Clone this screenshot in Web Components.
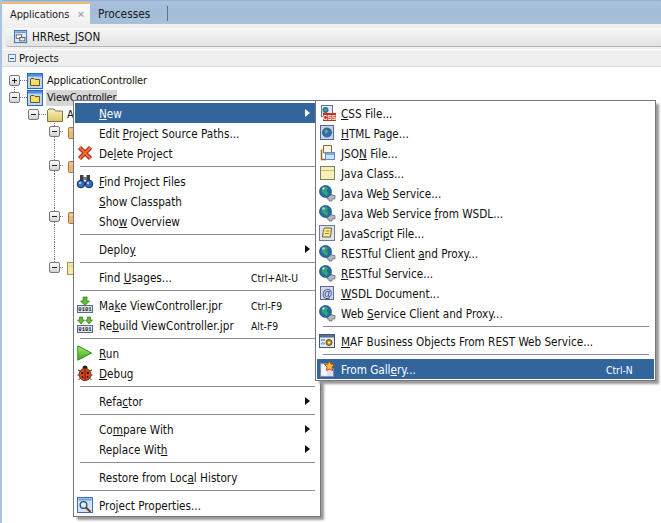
<!DOCTYPE html>
<html>
<head>
<meta charset="utf-8">
<title>Applications</title>
<style>
  html, body { margin: 0; padding: 0; background: #fff; }
  body { font: 11.65px "DejaVu Sans", "Liberation Sans", sans-serif; font-stretch: condensed; color: #111; }
  u { text-underline-offset: 1px; }
</style>
</head>
<body>

<ide-window>
  <tab-bar slot="top">
    <tab-item active closable style="font-size:11px;letter-spacing:-.1px">Applications</tab-item>
    <tab-item style="font-size:11.8px">Processes</tab-item>
  </tab-bar>
  <app-strip slot="top" style="font-size:11.5px">HRRest_JSON</app-strip>
  <section-head slot="top" style="font-size:11.2px">Projects</section-head>

  <tree-list slot="top">
    <tree-row x="14" handle="plus" icon="project" lines="14:b">ApplicationController</tree-row>
    <tree-row x="14" handle="minus" icon="project" lines="14:t 33:b" selected>ViewController</tree-row>
    <tree-row x="33" handle="minus" icon="folder" lines="54:b">A</tree-row>
    <tree-row x="54" handle="minus" icon="pkg" lines="54:f"></tree-row>
    <tree-row lines="54:f"></tree-row>
    <tree-row x="54" handle="minus" icon="pkg" lines="54:f"></tree-row>
    <tree-row lines="54:f"></tree-row>
    <tree-row lines="54:f"></tree-row>
    <tree-row x="54" handle="minus" icon="pkg" lines="54:f"></tree-row>
    <tree-row lines="54:f"></tree-row>
    <tree-row lines="54:f"></tree-row>
    <tree-row x="54" handle="minus" icon="yfolder" lines="54:t"></tree-row>
  </tree-list>

  <pop-menu style="left:73px;top:100px;width:248px;--short:54px">
    <menu-row active arrow><u>N</u>ew</menu-row>
    <menu-row>Edit <u>P</u>roject Source Paths...</menu-row>
    <menu-row icon="delete">De<u>l</u>ete Project</menu-row>
    <menu-sep></menu-sep>
    <menu-row icon="binoculars"><u>F</u>ind Project Files</menu-row>
    <menu-row><u>S</u>how Classpath</menu-row>
    <menu-row>Sho<u>w</u> Overview</menu-row>
    <menu-sep></menu-sep>
    <menu-row arrow>Deplo<u>y</u></menu-row>
    <menu-sep></menu-sep>
    <menu-row shortcut="Ctrl+Alt-U">Find <u>U</u>sages...</menu-row>
    <menu-sep></menu-sep>
    <menu-row icon="make" shortcut="Ctrl-F9">Ma<u>k</u>e ViewController.jpr</menu-row>
    <menu-row icon="rebuild" shortcut="Alt-F9">Re<u>b</u>uild ViewController.jpr</menu-row>
    <menu-sep></menu-sep>
    <menu-row icon="run"><u>R</u>un</menu-row>
    <menu-row icon="debug"><u>D</u>ebug</menu-row>
    <menu-sep></menu-sep>
    <menu-row arrow>Refa<u>c</u>tor</menu-row>
    <menu-sep></menu-sep>
    <menu-row arrow>Co<u>m</u>pare With</menu-row>
    <menu-row arrow>Replace Wit<u>h</u></menu-row>
    <menu-sep></menu-sep>
    <menu-row>Restore from Loc<u>a</u>l History</menu-row>
    <menu-sep></menu-sep>
    <menu-row icon="props">Pro<u>j</u>ect Properties...</menu-row>
  </pop-menu>

  <pop-menu style="left:315px;top:100px;width:341px;--short:34px;--sep-left:6px;--sep-right:5px">
    <menu-row icon="css"><u>C</u>SS File...</menu-row>
    <menu-row icon="html"><u>H</u>TML Page...</menu-row>
    <menu-row icon="json">JSO<u>N</u> File...</menu-row>
    <menu-row icon="jclass"><u>J</u>ava Class...</menu-row>
    <menu-row icon="ws">Java We<u>b</u> Service...</menu-row>
    <menu-row icon="ws">Java Web Service <u>f</u>rom WSDL...</menu-row>
    <menu-row icon="js">JavaScri<u>p</u>t File...</menu-row>
    <menu-row icon="ws">RESTful Client <u>a</u>nd Proxy...</menu-row>
    <menu-row icon="ws"><u>R</u>ESTful Service...</menu-row>
    <menu-row icon="wsdl"><u>W</u>SDL Document...</menu-row>
    <menu-row icon="ws">Web <u>S</u>ervice Client and Proxy...</menu-row>
    <menu-sep></menu-sep>
    <menu-row icon="maf"><u>M</u>AF Business Objects From REST Web Service...</menu-row>
    <menu-sep></menu-sep>
    <menu-row active icon="gallery" shortcut="Ctrl-N">From Gall<u>e</u>ry...</menu-row>
  </pop-menu>
</ide-window>

<script>
const BITS = `<rect x=".5" y="8.5" width="15" height="7" fill="#dfe6f0" stroke="#5a6a86"/><text x="8" y="14.3" font-size="5.6" font-family="Liberation Mono" font-weight="bold" text-anchor="middle" fill="#222">0101</text>`;

const ICONS = {
  project: `<rect x=".5" y=".5" width="15" height="15" fill="#bcd6f2" stroke="#2c68c0"/><rect x="1" y="1" width="14" height="2.5" fill="#4f8ddc"/>
    <path d="M3.5 6V12.5H12.5V6.5H8L7 5.5H4Z" fill="#f5dc6c" stroke="#6e5c14"/>`,
  folder: `<defs><linearGradient id="f" x1="0" y1="0" x2="0" y2="1"><stop offset="0" stop-color="#fbf3bd"/><stop offset="1" stop-color="#dcc768"/></linearGradient></defs>
    <path d="M.5 3.5 2 2H7L8.5 4H15.5V14.5H.5Z" fill="url(#f)" stroke="#7d7344"/>`,
  yfolder: `<rect x="3.5" y="2.5" width="12" height="12" fill="#f5e9ae" stroke="#a39356"/><path d="M5 6H14" stroke="#d9c678"/>`,
  pkg: `<rect x="4.5" y="3.5" width="11" height="11" rx="1" fill="#e8b878" stroke="#a8773c"/><path d="M5 6H15" stroke="#f6dcae"/>`,
  window: `<rect x=".5" y=".5" width="14" height="14" fill="#dbe7f5" stroke="#2e66ad"/><rect x="1.5" y="1.5" width="12" height="2" fill="#6d9bd6"/>
    <rect x="2.5" y="5.5" width="6" height="4" fill="#fff" stroke="#555"/><rect x="6.5" y="8.5" width="6" height="4" fill="#e6e6e6" stroke="#555"/>`,
  delete: `<path d="M2.5 2.5 13.5 13.5M13.5 2.5 2.5 13.5" stroke="#a52c10" stroke-width="4.4" fill="none"/><path d="M2.5 2.5 13.5 13.5M13.5 2.5 2.5 13.5" stroke="#f2693a" stroke-width="2.4" fill="none"/>`,
  binoculars: `<path d="M3 2H6.5V8H3ZM9.5 2H13V8H9.5Z" fill="#3a3f4a"/><rect x="6" y="4" width="4" height="3" fill="#6b7280"/>
    <circle cx="4" cy="11" r="3.8" fill="#2f6fc4" stroke="#1c2c50"/><circle cx="12" cy="11" r="3.8" fill="#2f6fc4" stroke="#1c2c50"/><circle cx="3" cy="10" r="1.2" fill="#9fd0f6"/><circle cx="11" cy="10" r="1.2" fill="#9fd0f6"/>`,
  make: `<path d="M6 0H10V4H12.5L8 8.5 3.5 4H6Z" fill="#5fbc2e" stroke="#2c7a1a" stroke-width=".7"/>${BITS}`,
  rebuild: `<path d="M2.5 0H5.5V3H7.5L4 7 .5 3H2.5ZM10.5 0H13.5V3H15.5L12 7 8.5 3H10.5Z" fill="#5fbc2e" stroke="#2c7a1a" stroke-width=".7"/>${BITS}`,
  run: `<defs><linearGradient id="g" x1="0" y1="0" x2="0" y2="1"><stop offset="0" stop-color="#a8ec70"/><stop offset="1" stop-color="#3aa81e"/></linearGradient></defs>
    <path d="M.8 .8V15.2L14.5 8Z" fill="url(#g)" stroke="#2d8a22"/>`,
  debug: `<path d="M1 5 3 6M15 5 13 6M.5 10H3M15.5 10H13M1.5 15 3.5 13M14.5 15 12.5 13" stroke="#333" fill="none"/><circle cx="8" cy="3" r="2.5" fill="#222"/>
    <circle cx="8" cy="9.5" r="6" fill="#d8481c" stroke="#7c2a10"/><path d="M8 4V15.5" stroke="#6a2410"/><circle cx="5.2" cy="8" r="1.2" fill="#3a1a10"/><circle cx="10.8" cy="8" r="1.2" fill="#3a1a10"/><circle cx="5.5" cy="12" r="1" fill="#3a1a10"/><circle cx="10.5" cy="12" r="1" fill="#3a1a10"/>`,
  props: `<rect x=".5" y=".5" width="15" height="15" fill="#cfe2f6" stroke="#3a6fb5"/><rect x="1.5" y="1.5" width="13" height="2" fill="#6f9fdc"/>
    <circle cx="6.5" cy="8" r="3.3" fill="#d8f0fa" stroke="#28506e" stroke-width="1.3"/><path d="M9 10.5 13.5 15" stroke="#7a3a20" stroke-width="2"/>`,
  css: `<rect x="2.5" y=".5" width="11" height="11" fill="#dfe8f4" stroke="#62748e"/><circle cx="6.5" cy="5" r="3" fill="#2f6fb4"/><path d="M5 4.5 7 3.5 8 5.5 6 6.5Z" fill="#58b040"/>
    <rect x="4" y="8" width="13" height="8" fill="#c9301c"/><text x="10.5" y="14.5" font-size="6.5" font-weight="bold" font-family="Liberation Sans" text-anchor="middle" fill="#fff">CSS</text>`,
  html: `<rect x="1.5" y=".5" width="13" height="14" fill="#c6d3e8" stroke="#57688a"/><circle cx="8" cy="7.5" r="4.6" fill="#2c6db8" stroke="#1b3f78" stroke-width=".6"/><path d="M5.5 5.5 8 4.5 9 7 6.5 9Z" fill="#66b84a"/>`,
  json: `<path d="M4.5 .5H12.5V8H4.5Z" fill="#fff7e0" stroke="#7c6a3a"/><path d="M2.5 4.5V14.5H7" fill="none" stroke="#8a6a24" stroke-width="1.5"/>
    <rect x="6.5" y="7.5" width="9" height="7" fill="#cfe2f8" stroke="#5b8ccc"/><rect x="7" y="8" width="8" height="2" fill="#7eaae0"/>`,
  jclass: `<rect x="1.5" y="1.5" width="14" height="13" fill="#f9f0b4" stroke="#7e7e70"/><path d="M2 5.5H15" stroke="#c9bd7a"/>`,
  ws: `<path d="M10 9H13V10.5H16V14H13V16H10V14H8V11H10Z" fill="#b4bac4" stroke="#5b6068" stroke-width=".7"/>
    <circle cx="6.5" cy="6.5" r="6" fill="#1f6cae" stroke="#16466e" stroke-width=".7"/><path d="M3 3.5 6.5 1.5 9 3 7.5 6 9.5 8 7.5 11 4.5 8.5 2.5 7Z" fill="#3ba264"/><circle cx="4.5" cy="3.5" r="1.3" fill="#cfeaff" opacity=".8"/>`,
  js: `<rect x=".5" y=".5" width="15" height="15" fill="#dde4ef" stroke="#6c7a94"/><path d="M5.5 3H12.5L11.5 12H3.5L4.5 4.5Z" fill="#f7e8a0" stroke="#7e5a18"/><path d="M6.5 6H10.5M6 8.5H10" stroke="#a58a3c"/>`,
  wsdl: `<rect x="1.5" y="1.5" width="13" height="13" fill="#d4dcec" stroke="#5d6a86"/><text x="8" y="12" font-size="10.5" font-weight="bold" font-family="Liberation Sans" text-anchor="middle" fill="#33449a">@</text>`,
  maf: `<rect x=".5" y="1.5" width="15" height="13" fill="#e6ecf4" stroke="#46586f"/><rect x="1" y="2" width="14" height="2.5" fill="#51719c"/><rect x="2" y="6" width="4" height="2" fill="#8ea8c8"/><rect x="2" y="9.5" width="4" height="2" fill="#8ea8c8"/>
    <circle cx="10" cy="9.5" r="3" fill="#c88e24" stroke="#6e4d10"/><circle cx="10" cy="9.5" r="1" fill="#fff"/>`,
  gallery: `<path d="M1.5 2.5H9L14.5 8V15.5H1.5Z" fill="#dcdcf2" stroke="#8a8aa6"/><path d="M2.5 14.5V3.5H8V14.5Z" fill="#f6f6ff"/>
    <path d="M10.5 0 12 3 15.5 3.5 13 6 13.5 9.5 10.5 8 7.5 9.5 8 6 5.5 3.5 9 3Z" fill="#f7c52c" stroke="#c2341c" stroke-width=".9"/>`
};

class IdeIcon extends HTMLElement {
  connectedCallback() {
    const size = this.getAttribute("size") || 16;
    this.attachShadow({ mode: "open" }).innerHTML = `
      <style>:host { display: block; width: ${size}px; height: ${size}px; } svg { display: block; overflow: visible; }</style>
      <svg width="${size}" height="${size}" viewBox="0 0 16 16">${ICONS[this.getAttribute("name")] || ""}</svg>`;
  }
}

class IdeWindow extends HTMLElement {
  constructor() {
    super();
    this.attachShadow({ mode: "open" }).innerHTML = `
      <style>
        :host { display: block; position: relative; width: 661px; height: 523px; overflow: hidden;
                box-sizing: border-box; border-left: 2px solid #a9c3e3; background: #fff; }
        ::slotted(pop-menu) { position: absolute; margin-left: -2px; }
      </style>
      <slot name="top"></slot>
      <slot></slot>`;
  }
}

class TabBar extends HTMLElement {
  constructor() {
    super();
    this.attachShadow({ mode: "open" }).innerHTML = `
      <style>
        :host { display: flex; height: 24px; box-sizing: border-box; padding-top: 2px;
                background: linear-gradient(#a9c2df, #a3bcd8 40%, #a9c0da); border-top: 1px solid #93b0d2; }
        .rule { width: 1px; height: 15px; margin: 3px 0 0 8px; background: #5c7390; }
      </style>
      <slot></slot><div class="rule"></div>`;
  }
}

class TabItem extends HTMLElement {
  constructor() {
    super();
    this.attachShadow({ mode: "open" }).innerHTML = `
      <style>
        :host { display: flex; align-items: center; box-sizing: border-box; height: 21px; color: #1a1a1a; }
        :host([active]) { width: 88px; padding: 0 6px 0 8px; margin-top: -1px; height: 22px; justify-content: space-between;
                          border-top: 2px solid #ecbc72; background: linear-gradient(#fbfbfb, #f1f1f1); }
        :host(:not([active])) { padding-left: 8px; width: 69px; }
        .x { color: #a9a9a9; font: bold 11px "Liberation Sans", sans-serif; }
      </style>
      <span><slot></slot></span>${this.hasAttribute("closable") ? '<span class="x">×</span>' : ""}`;
  }
}

class AppStrip extends HTMLElement {
  constructor() {
    super();
    this.attachShadow({ mode: "open" }).innerHTML = `
      <style>
        :host { display: block; height: 25px; box-sizing: border-box; padding: 4px 0 0 4px; background: #efefef; }
        .box { display: flex; align-items: center; gap: 4px; height: 19px; padding-left: 8px; box-sizing: border-box;
               border-radius: 3px 0 0 3px; border-bottom: 1px solid #b5b5b5;
               background: linear-gradient(#f8f8f8, #ececec 50%, #e4e4e4); }
        ide-icon { margin-top: -1px; }
      </style>
      <div class="box"><ide-icon name="window" size="14"></ide-icon><span><slot></slot></span></div>`;
  }
}

class SectionHead extends HTMLElement {
  constructor() {
    super();
    this.attachShadow({ mode: "open" }).innerHTML = `
      <style>
        :host { display: flex; align-items: center; gap: 3px; height: 18px; box-sizing: border-box;
                padding-left: 6px; background: #efefef; border-top: 1px solid #fff; border-bottom: 1px solid #cfdcea; }
        .box { width: 6px; height: 6px; border: 1px solid #6e8cae; background: #e4ecf4; position: relative; box-sizing: content-box; }
        .box::after { content: ""; position: absolute; left: 1px; right: 1px; top: 3px; height: 1px; background: #35557a; }
      </style>
      <div class="box"></div><span><slot></slot></span>`;
  }
}

class TreeList extends HTMLElement {
  constructor() {
    super();
    this.attachShadow({ mode: "open" }).innerHTML = `
      <style>:host { display: block; padding-top: 5px; }</style>
      <slot></slot>`;
  }
}

class TreeRow extends HTMLElement {
  connectedCallback() {
    const x = +this.getAttribute("x");
    const handle = this.getAttribute("handle");
    const icon = this.getAttribute("icon");
    const dots = "repeating-linear-gradient(to bottom,#777 0 1px,transparent 1px 2px)";
    const bg = (this.getAttribute("lines") || "").split(" ").filter(Boolean).map(spec => {
      const [lx, part] = spec.split(":");
      const pos = { t: ["0", "9px"], b: ["9px", "8px"], f: ["0", "17px"] }[part];
      return `${dots} ${lx}px ${pos[0]} / 1px ${pos[1]} no-repeat`;
    }).join(",");
    // row coordinates are inside the 2px left rail
    const shift = x ? x - 2 - 5 : 0;
    const gap = { project: 7, folder: 8 }[icon] || 4;
    this.attachShadow({ mode: "open" }).innerHTML = `
      <style>
        :host { display: flex; align-items: center; height: 17px; box-sizing: border-box; padding-left: ${shift}px;
                ${bg ? `background: ${bg};` : ""} margin-left: -2px; white-space: nowrap; font-size: 11px; letter-spacing: -.2px; }
        .h { flex: none; width: 9px; height: 9px; border: 1px solid #7a7a7a; border-radius: 2px; position: relative; box-sizing: content-box;
             margin-left: 2px; background: linear-gradient(#fff, #d2d2d2); }
        .h::before { content: ""; position: absolute; left: 2px; right: 2px; top: 4px; height: 1px; background: #222; }
        .h.plus::after { content: ""; position: absolute; top: 2px; bottom: 2px; left: 4px; width: 1px; background: #222; }
        .dots { flex: none; width: ${gap}px; height: 1px; background: repeating-linear-gradient(to right,#777 0 1px,transparent 1px 2px); }
        .label { margin-left: 3px; padding: 0 1px; height: 16px; line-height: 16px; }
        :host([selected]) .label { background: #d6d6d6; }
        ide-icon { flex: none; }
      </style>
      ${handle ? `<div class="h ${handle}"></div><div class="dots"></div>` : ""}
      ${icon ? `<ide-icon name="${icon}"></ide-icon>` : ""}
      ${this.firstChild ? '<span class="label"><slot></slot></span>' : ""}`;
  }
}

class PopMenu extends HTMLElement {
  constructor() {
    super();
    this.attachShadow({ mode: "open" }).innerHTML = `
      <style>
        :host { display: block; box-sizing: border-box; padding: 2px 1px 1px; background: #fff;
                border: 1px solid #75757f; box-shadow: 3px 3px 2px -0.5px #9a9a9a; }
      </style>
      <slot></slot>`;
  }
}

class MenuRow extends HTMLElement {
  connectedCallback() {
    const icon = this.getAttribute("icon");
    const shortcut = this.getAttribute("shortcut");
    this.attachShadow({ mode: "open" }).innerHTML = `
      <style>
        :host { display: grid; grid-template-columns: 24px 1fr var(--short, 53px) 14px; align-items: center; height: 20px;
                white-space: nowrap; color: #111; }
        :host([active]) { background: #31659c; color: #fff; }
        .ic { padding-left: 2px; }
        .tx { padding-top: 2px; }
        .sc { font-size: 10.3px; padding-top: 2px; }
        .ar { width: 0; height: 0; border-left: 5px solid currentColor; border-top: 4px solid transparent; border-bottom: 4px solid transparent; }
      </style>
      <div class="ic">${icon ? `<ide-icon name="${icon}"></ide-icon>` : ""}</div>
      <div class="tx"><slot></slot></div>
      <div class="sc">${shortcut || ""}</div>
      <div>${this.hasAttribute("arrow") ? '<div class="ar"></div>' : ""}</div>`;
  }
}

class MenuSep extends HTMLElement {
  constructor() {
    super();
    this.attachShadow({ mode: "open" }).innerHTML = `
      <style>
        :host { display: block; height: 1px; margin: 3px var(--sep-right, 4px) 4px var(--sep-left, 5px); background: #8d8d97; }
      </style>`;
  }
}

customElements.define("ide-icon", IdeIcon);
customElements.define("ide-window", IdeWindow);
customElements.define("tab-bar", TabBar);
customElements.define("tab-item", TabItem);
customElements.define("app-strip", AppStrip);
customElements.define("section-head", SectionHead);
customElements.define("tree-list", TreeList);
customElements.define("tree-row", TreeRow);
customElements.define("pop-menu", PopMenu);
customElements.define("menu-row", MenuRow);
customElements.define("menu-sep", MenuSep);
</script>
</body>
</html>
